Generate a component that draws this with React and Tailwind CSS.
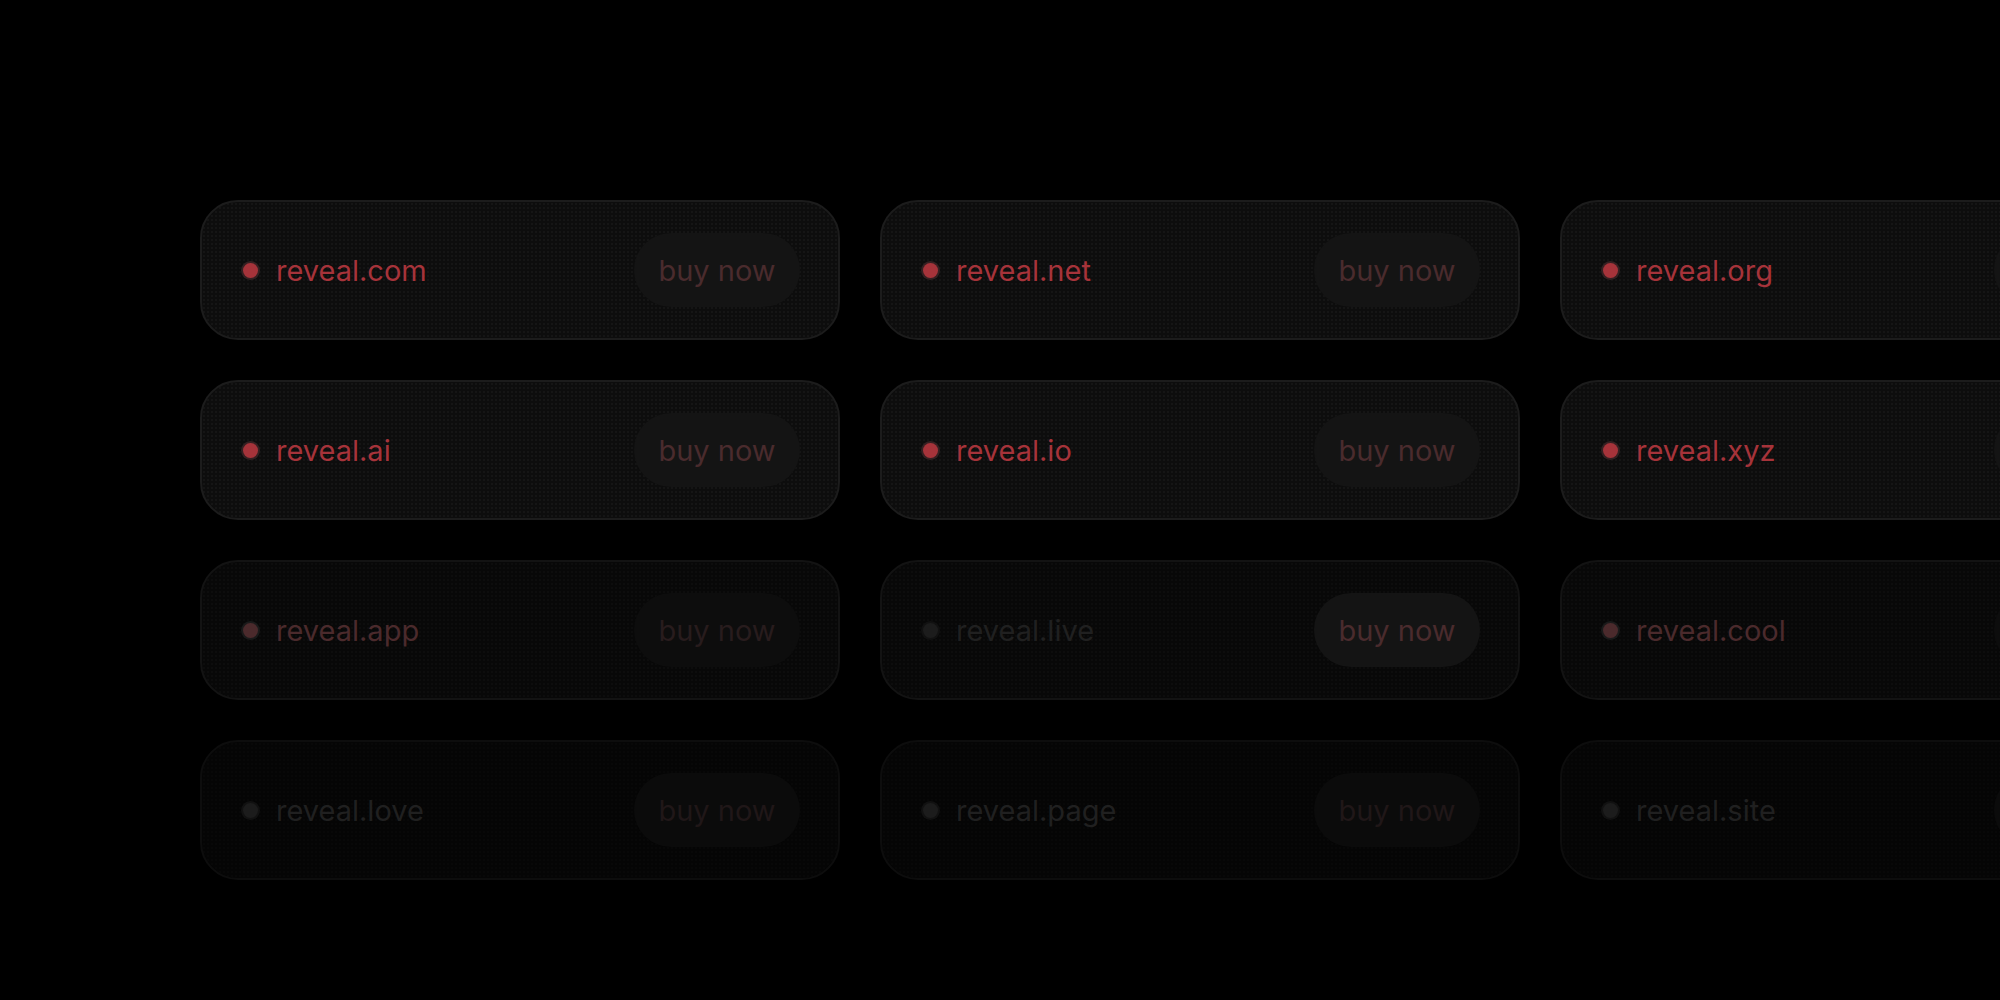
import React from 'react';

const rows = [
  [
    { name: 'reveal.com', tone: 'on', btn: 'on' },
    { name: 'reveal.net', tone: 'on', btn: 'on' },
    { name: 'reveal.org', tone: 'on', btn: 'on' },
  ],
  [
    { name: 'reveal.ai', tone: 'on', btn: 'on' },
    { name: 'reveal.io', tone: 'on', btn: 'on' },
    { name: 'reveal.xyz', tone: 'on', btn: 'on' },
  ],
  [
    { name: 'reveal.app', tone: 'mid', btn: 'dim', card: 'mid' },
    { name: 'reveal.live', tone: 'off', btn: 'on', card: 'mid' },
    { name: 'reveal.cool', tone: 'mid', btn: 'dim', card: 'mid' },
  ],
  [
    { name: 'reveal.love', tone: 'off', btn: 'low', card: 'low' },
    { name: 'reveal.page', tone: 'off', btn: 'low', card: 'low' },
    { name: 'reveal.site', tone: 'off', btn: 'low', card: 'low' },
  ],
];

const cardStyles = {
  on: 'bg-[#0d0d0d] border-[#1c1c1c] bg-[radial-gradient(rgba(255,255,255,0.03)_1px,transparent_1px)]',
  mid: 'bg-[#080808] border-[#131313] bg-[radial-gradient(rgba(255,255,255,0.018)_1px,transparent_1px)]',
  low: 'bg-[#050505] border-[#0d0d0d] bg-[radial-gradient(rgba(255,255,255,0.012)_1px,transparent_1px)]',
};

const textStyles = {
  on: 'text-[#a6333a]',
  mid: 'text-[#4b2a2c]',
  off: 'text-[#202020]',
};

const dotStyles = {
  on: 'bg-[#a6333a] ring-[#352022]',
  mid: 'bg-[#4b2a2c] ring-[#1a1a1a]',
  off: 'bg-[#1c1c1c] ring-[#111111]',
};

const btnStyles = {
  on: 'bg-[#141414] text-[#4a2b2d]',
  dim: 'bg-[#0d0d0d] text-[#281c1d]',
  low: 'bg-[#0b0b0b] text-[#201718]',
};

function DomainCard({ name, tone, btn, card = 'on' }) {
  return (
    <div
      className={`w-[640px] h-[140px] shrink-0 rounded-[38px] border-2 ${cardStyles[card]} bg-[size:4px_4px] flex items-center justify-between pl-[41px] pr-[38px]`}
    >
      <div className="flex items-center gap-[18px]">
        <span className={`w-[15px] h-[15px] rounded-full ring-2 ${dotStyles[tone]}`} />
        <span className={`text-[29px] leading-none ${textStyles[tone]}`}>{name}</span>
      </div>
      <button className={`h-[74px] w-[166px] rounded-full text-[29px] leading-none ${btnStyles[btn]}`}>
        buy now
      </button>
    </div>
  );
}

export default function App() {
  return (
    <div className="w-[2000px] h-[1000px] bg-black overflow-hidden font-['Inter',sans-serif]">
      <div className="pt-[200px] pl-[200px] flex flex-col gap-[40px]">
        {rows.map((row, i) => (
          <div key={i} className="flex gap-[40px]">
            {row.map((d) => (
              <DomainCard key={d.name} {...d} />
            ))}
          </div>
        ))}
      </div>
    </div>
  );
}
